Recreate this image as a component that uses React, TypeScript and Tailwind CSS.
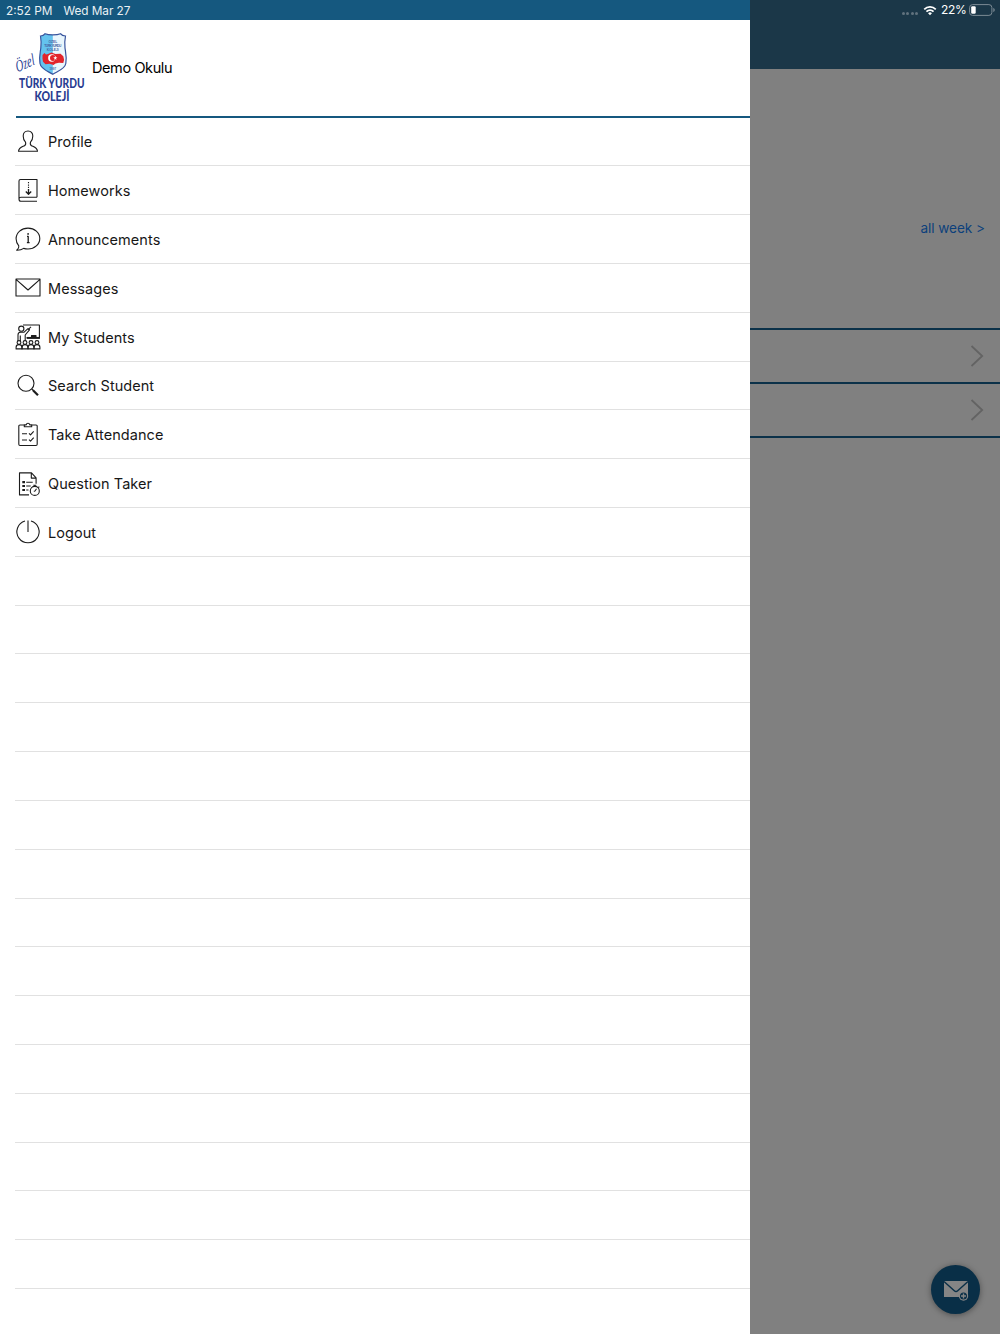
import React from "react";

interface MenuItem {
    label: string;
    icon: React.ReactNode;
}

const Icon: React.FC<{ children: React.ReactNode }> = ({ children }) => (
    <svg
        width="26"
        height="28"
        viewBox="0 0 26 28"
        fill="none"
        stroke="#1c1c1c"
        strokeWidth="1.1"
        strokeLinejoin="round"
    >
        {children}
    </svg>
);

const menuItems: MenuItem[] = [
    {
        label: "Profile",
        icon: (
            <Icon>
                <path d="M13 3c-3 0-4.800 2-4.800 5 0 2.600.9 4.800 2.300 6.200.5 1.600.2 2.800-1 3.500-1.700 1-5.600 1.400-6 5.600h19c-.4-4.200-4.300-4.600-6-5.600-1.200-.7-1.500-1.900-1-3.500 1.400-1.400 2.300-3.600 2.300-6.200 0-3-1.800-5-4.800-5z" />
            </Icon>
        ),
    },
    {
        label: "Homeworks",
        icon: (
            <Icon>
                <path d="M22 20.300V2.500H5.500C4.500 2.500 4 3.200 4 4v18c0 1.400.8 2.300 2 2.300h16M22 20.300H6c-1.200 0-2 .7-2 1.700" />
                <path d="M13.500 5v8" strokeDasharray="1.300 1.100" />
                <path d="M13.500 12v5M10.800 14.500l2.700 2.700 2.700-2.700" strokeWidth="1.300" />
            </Icon>
        ),
    },
    {
        label: "Announcements",
        icon: (
            <Icon>
                <path d="M3.800 19.800C2.100 17.900 1.100 15.700 1.100 12.800 1.100 6.600 6.500 2.100 13 2.100s11.800 4.500 11.800 10.300S19.500 23 13 23c-1.500 0-3-.2-4.300-.6-1.800 1.300-4.200 2-7 1.900 1.700-1.300 2.400-2.800 2.100-4.500z" />
                <path d="M12 10.300h1.200v6.200M11.900 16.600h2.700" strokeWidth="1.300" />
                <circle cx="13.100" cy="7.900" r=".9" fill="#1c1c1c" stroke="none" />
            </Icon>
        ),
    },
    {
        label: "Messages",
        icon: (
            <Icon>
                <path d="M1 5h24v17H1zM1 5.300l12 10.700L25 5.300" />
            </Icon>
        ),
    },
    {
        label: "My Students",
        icon: (
            <Icon>
                <path d="M8 2h16.400v13.300H12M5.300 18v-5.500M3 18v-6c0-1.600 1-2.700 2.600-2.700h3.300l4-3.600 1.600 1.100-4.300 5.200v6" />
                <circle cx="6.300" cy="5.700" r="2.600" />
                <path d="M13 6.700l3-2.900" />
                <path d="M16.500 14v-1.500h4.500V14z" fill="#1c1c1c" />
                <path d="M11.500 14.800h13.300" strokeWidth="1.700" />
                {[4, 10, 16, 22].map((x) => (
                    <g key={x}>
                        <circle cx={x} cy="19.500" r="1.900" />
                        <path d={`M${x - 2.9} 25.900v-1.600c0-1.700 1.100-2.700 2.900-2.700s2.900 1 2.900 2.700v1.600z`} />
                    </g>
                ))}
            </Icon>
        ),
    },
    {
        label: "Search Student",
        icon: (
            <Icon>
                <circle cx="11" cy="11.200" r="8" />
                <path d="M16.800 17l1.500 1.500" />
                <path d="M18 18.200l5 5" strokeWidth="2.200" />
            </Icon>
        ),
    },
    {
        label: "Take Attendance",
        icon: (
            <Icon>
                <path d="M9 4H5c-.8 0-1.200.5-1.200 1.200v18.100c0 .7.4 1.200 1.200 1.200h16c.8 0 1.200-.5 1.200-1.200V5.200c0-.7-.4-1.200-1.200-1.200h-4" />
                <path d="M9.300 5.800V3.900h1.900c.2-1 .8-1.600 1.800-1.600s1.600.6 1.800 1.600h1.900v1.900z" />
                <path d="M7 12.700h5M7 19h5M14 12.300l1.500 1.600 3.200-3.600M14 18.600l1.500 1.600 3.200-3.600" />
            </Icon>
        ),
    },
    {
        label: "Question Taker",
        icon: (
            <Icon>
                <path d="M14 24.900H4.500V2.900h12l4.600 4.900v6M16.300 3.100v5h4.600" />
                <path d="M11.200 12.200h6.500M11.200 16h4.500M11.200 20h2.300" />
                <path d="M7.300 12.200H10M7.300 16H10M7.300 20H10" strokeWidth="2.200" />
                <circle cx="19.800" cy="20.900" r="4.500" />
                <path d="M18.300 15.300h3M19.800 15.300v1M23.300 17.600l1-1M19.800 21.200l1.700-2.400M19.800 21.200h-1" />
            </Icon>
        ),
    },
    {
        label: "Logout",
        icon: (
            <Icon>
                <path d="M10 3a11.100 11.100 0 1 0 6 0" />
                <path d="M13 2.500v11.600" />
            </Icon>
        ),
    },
];

const emptyRows = Array.from({ length: 15 });

const shieldPath =
    "M25.500 5c2 0 3.600-.8 4.600-2.300 3.500 1.500 11.800 1.500 15.400 0C46.500 4.200 48 5 50.500 5c-.8 4-1 7.500-.5 12 .5 4 2 9 .8 15.500C50 38 43 40 37.800 43.300 32.500 40 25.800 38 25 32.500c-1.200-6.500.4-11.500.8-15.500.5-4.500.4-8-.3-12z";

const SchoolLogo: React.FC = () => (
    <svg className="overflow-visible" width="72" height="72" viewBox="0 0 72 72">
        <path d={shieldPath} fill="#e9f6fd" />
        <path
            d="M25.500 5c2 0 3.600-.8 4.600-2.300 2 .8 4.900 1.200 7.700 1.200v39.400C32.500 40 25.800 38 25 32.500c-1.200-6.500.4-11.500.8-15.500.5-4.500.4-8-.3-12z"
            fill="#64c3ee"
        />
        <path d={shieldPath} fill="none" stroke="#38549d" strokeWidth="1.200" />
        <g fill="#4867a5" fontFamily="Liberation Sans, sans-serif" fontSize="3.300" fontWeight="700" textAnchor="middle">
            <text x="37.800" y="11.600">ÖZEL</text>
            <text x="37.800" y="15.600" textLength="17">TÜRK YURDU</text>
            <text x="37.800" y="19.600">KOLEJİ</text>
            <text x="37.800" y="38.500" fontSize="3">1997</text>
        </g>
        <path
            d="M27.500 24l2-2 1.500 1.500 2-.5 3.500-1.500 4 1.500 5-.3 2.800 2.500.8 3.500-.8 3.300-4.300-.2-3.500.8-2 1.400-4-1.300-4 .5-2.500-2.500-.5-3z"
            fill="#e2242b"
        />
        <circle cx="36.800" cy="27" r="3.700" fill="#fff" />
        <circle cx="37.900" cy="27" r="2.900" fill="#e2242b" />
        <path d="M40.300 24.800l.5 1.500h1.600l-1.300 1 .5 1.500-1.300-.9-1.300.9.5-1.500-1.300-1h1.600z" fill="#fff" />
        <g fill="#293c91">
            <text
                transform="translate(2.300 41.500) rotate(-25) skewX(-10)"
                fontFamily="Liberation Serif, serif"
                fontStyle="italic"
                fontSize="16"
                textLength="20"
                lengthAdjust="spacingAndGlyphs"
            >
                Özel
            </text>
            <g fontFamily="Lato, sans-serif" fontWeight="900">
                <text x="4" y="56.800" fontSize="12.600" textLength="65.500" lengthAdjust="spacingAndGlyphs">
                    TÜRK YURDU
                </text>
                <text x="19.500" y="69.700" fontSize="12.600" textLength="35" lengthAdjust="spacingAndGlyphs">
                    KOLEJİ
                </text>
            </g>
        </g>
    </svg>
);

const StatusIcons: React.FC = () => (
    <div className="flex h-5 items-center justify-end pr-[5px] text-white">
        <div className="mr-[5px] mt-[7px] flex gap-[1.5px]">
            {[0, 1, 2, 3].map((dot) => (
                <span key={dot} className="size-[3px] rounded-full bg-[#61727e]" />
            ))}
        </div>
        <svg width="14" height="11" viewBox="0 0 15 12" fill="none" stroke="currentColor" strokeWidth="1.900">
            <path d="M1.200 4.700a9 9 0 0 1 12.600 0M3.600 7.300a5.600 5.600 0 0 1 7.800 0" />
            <path d="M7.500 11.200L5.400 9a3 3 0 0 1 4.200 0z" fill="currentColor" stroke="none" />
        </svg>
        <span className="ml-1 w-[25px] whitespace-nowrap text-[12px] tracking-[-0.3px]">22%</span>
        <svg className="ml-[3px] shrink-0" width="26" height="12" viewBox="0 0 26 12">
            <rect x=".6" y=".6" width="22.300" height="10.800" rx="3" fill="none" stroke="#7c8a94" />
            <rect x="2.200" y="2.200" width="4.500" height="7.600" rx="1.200" fill="#fff" />
            <path d="M24.300 4v4c.9-.3 1.400-1 1.400-2s-.5-1.700-1.400-2z" fill="#7c8a94" />
        </svg>
    </div>
);

const ChevronRow: React.FC = () => (
    <div className="flex h-[53.800px] items-center justify-end border-b-2 border-[#0b3149] pr-4">
        <svg width="14" height="22" viewBox="0 0 14 22" fill="none" stroke="#636363" strokeWidth="1.800">
            <path d="M1.500 1l10.700 10L1.500 21" />
        </svg>
    </div>
);

const Drawer: React.FC = () => (
    <aside className="flex w-[750px] flex-col overflow-hidden bg-white">
        <div className="flex h-5 shrink-0 items-center gap-[10.500px] bg-[#15587f] pl-1.5 pt-px text-[11.800px] leading-4 text-[#e9f0f4]">
            <span className="w-[47px] whitespace-nowrap">2:52 PM</span>
            <span className="whitespace-nowrap tracking-[-0.050px]">Wed Mar 27</span>
        </div>
        <div className="ml-4 flex h-[97.500px] shrink-0 items-center gap-[5px] border-b-2 border-[#15587f]">
            <div className="-ml-px -mt-0.5">
                <SchoolLogo />
            </div>
            <span className="text-[14.500px] tracking-[-0.400px] text-black">Demo Okulu</span>
        </div>
        <nav className="ml-[15px]">
            {menuItems.map((item) => (
                <div
                    key={item.label}
                    className="flex h-[48.820px] items-center gap-[7px] border-b border-[#e1e1e1] pt-px text-[14.500px] tracking-[0.050px] text-[#171717]"
                >
                    {item.icon}
                    <span className="pt-[0.5px]">{item.label}</span>
                </div>
            ))}
            {emptyRows.map((_, index) => (
                <div key={index} className="h-[48.820px] border-b border-[#e1e1e1]" />
            ))}
        </nav>
    </aside>
);

export default function App() {
    return (
        <div className="flex h-[1334px] w-[1000px] overflow-hidden bg-[#808080] font-[Inter,sans-serif]">
            <Drawer />
            <main className="flex flex-1 flex-col">
                <header className="h-[69px] bg-[#1b3748]">
                    <StatusIcons />
                </header>
                <div className="flex h-[261px] items-start justify-end border-b-2 border-[#0b3149] pr-[15px] pt-[149px]">
                    <span className="text-[13.600px] leading-5 tracking-[-0.050px] text-[#0c407c]">all week &gt;</span>
                </div>
                <ChevronRow />
                <ChevronRow />
                <button className="mb-5 mr-5 mt-auto flex size-[49px] items-center justify-center self-end rounded-full bg-[#092f47] shadow-[0_1px_6px_rgba(0,0,0,0.4)]">
                    <svg width="26" height="22" viewBox="0 0 26 22">
                        <path d="M1 2h24v16H1z" fill="#858585" />
                        <path d="M1 2.500l10.300 9.300c1.100 1 2.300 1 3.400 0L25 2.500" fill="none" stroke="#092f47" strokeWidth="1.400" />
                        <circle cx="20.500" cy="17" r="4.700" fill="#858585" />
                        <circle cx="20.500" cy="17" r="3.500" fill="#092f47" />
                        <path d="M20.500 14.500v5M18 17h5" stroke="#858585" strokeWidth="1.400" />
                    </svg>
                </button>
            </main>
        </div>
    );
}
